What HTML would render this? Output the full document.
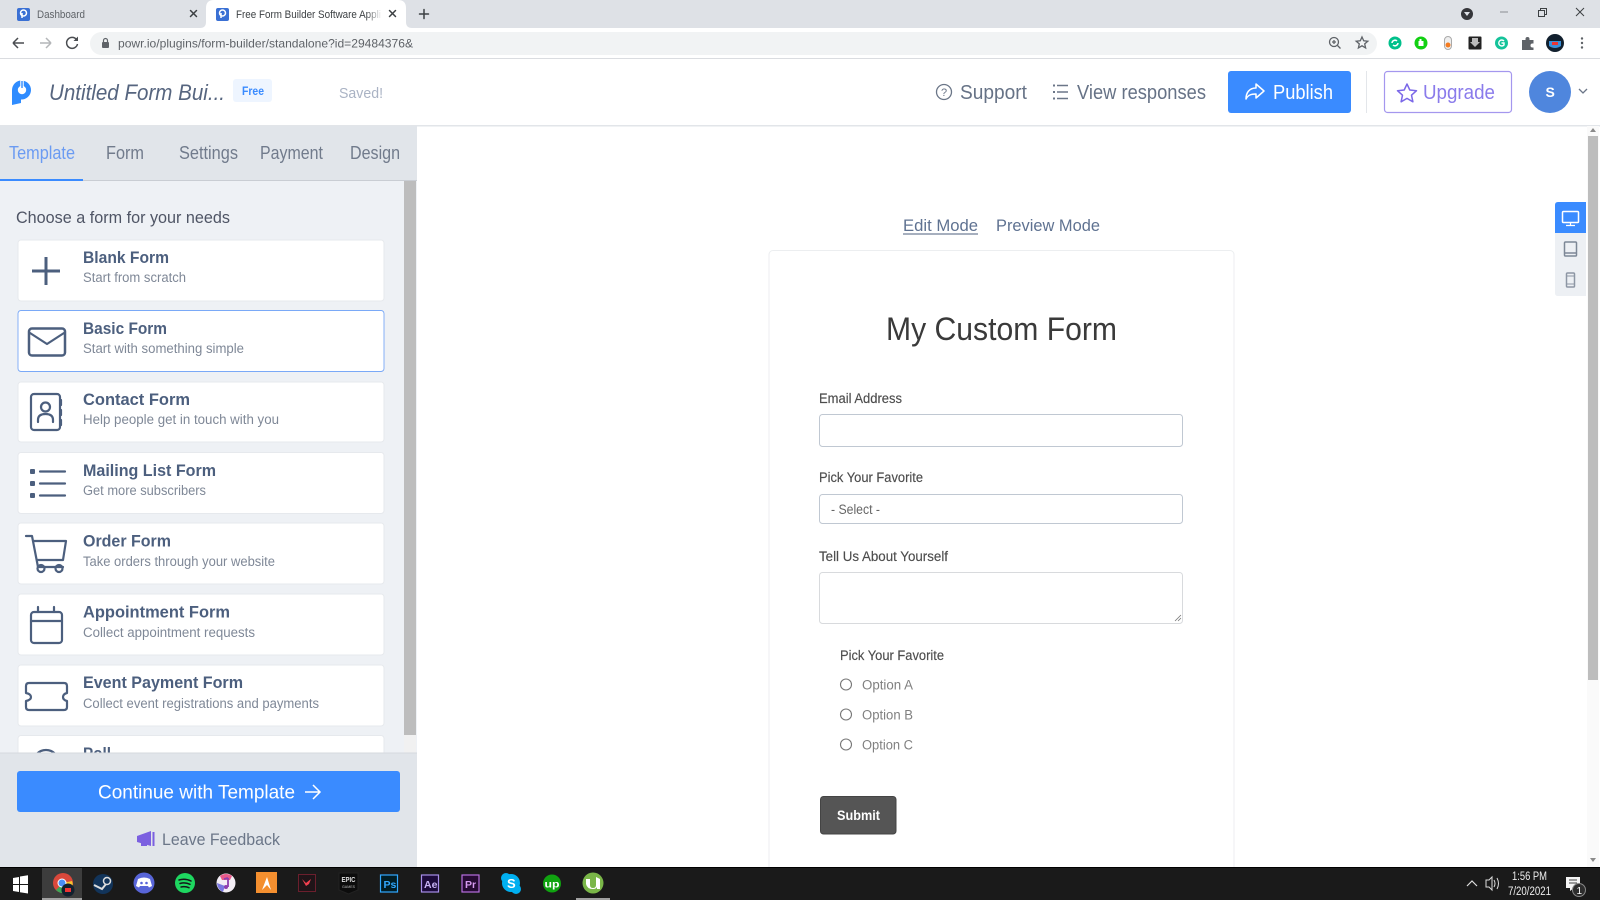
<!DOCTYPE html>
<html lang="en"><head><meta charset="utf-8"><title>Free Form Builder Software Application</title>
<style>
html,body{margin:0;padding:0;width:1600px;height:900px;overflow:hidden;background:#fff}
svg{display:block;filter:blur(.3px)}
text{font-family:"Liberation Sans",sans-serif}
.t{font-size:17px;fill:#4c5f7e;font-weight:bold}
.s{font-size:13.5px;fill:#7f8897}
.c{fill:#fff;stroke:#e6e9ed;stroke-width:1}
.i{fill:none;stroke:#4c5f7e;stroke-width:2.2;stroke-linejoin:round;stroke-linecap:round}
.l{font-size:13.5px;fill:#4d4d4d;stroke:#4d4d4d;stroke-width:.15}
.n{font-size:18px;fill:#717b8c}
.h{font-size:20px;fill:#667286}
.x{fill:none;stroke:#3c4043;stroke-width:1.5;stroke-linecap:round}
</style></head><body>
<svg width="1600" height="900" viewBox="0 0 1600 900" xmlns="http://www.w3.org/2000/svg">
<defs><linearGradient id="f"><stop offset="0" stop-color="#fff" stop-opacity="0"/><stop offset="1" stop-color="#fff"/></linearGradient></defs>
<rect width="1600" height="900" fill="#fff"/>
<!-- browser tabs -->
<rect width="1600" height="28" fill="#dee1e6"/>
<path d="M200 28q6 0 6-6V8q0-8 8-8h184q8 0 8 8v14q0 6 6 6z" fill="#fff"/>
<rect x="17" y="8" width="13" height="13" rx="2" fill="#3a70d4"/><circle cx="23.500" cy="13" r="3" fill="none" stroke="#fff" stroke-width="1.500"/><path d="M22 13v5" stroke="#fff" stroke-width="1.500"/>
<text x="37" y="18" font-size="11" fill="#5f6368" textLength="48" lengthAdjust="spacingAndGlyphs">Dashboard</text>
<path d="M190.500 10.500l6 6m0-6l-6 6" class="x"/>
<rect x="216" y="8" width="13" height="13" rx="2" fill="#3a70d4"/><circle cx="222.500" cy="13" r="3" fill="none" stroke="#fff" stroke-width="1.500"/><path d="M221 13v5" stroke="#fff" stroke-width="1.500"/>
<text x="236" y="18" font-size="11" fill="#3c4043" textLength="145" lengthAdjust="spacingAndGlyphs">Free Form Builder Software Appli</text>
<rect x="366" y="6" width="16" height="16" fill="url(#f)"/>
<path d="M389.500 10.500l6 6m0-6l-6 6" class="x"/>
<path d="M424 9.500v9m-4.500-4.500h9" class="x"/>
<circle cx="1467" cy="14" r="6" fill="#35363a"/><path d="M1464 12h6l-3 4z" fill="#dee1e6"/>
<path d="M1500 12h8" stroke="#8a8d91" stroke-width="1"/>
<rect x="1538.500" y="10.500" width="6" height="6" fill="none" stroke="#3c4043"/><path d="M1540.500 10.500v-2h6v6h-2" fill="none" stroke="#3c4043"/>
<path d="M1576 8l8 8m0-8l-8 8" stroke="#3c4043" fill="none"/>
<!-- address bar -->
<rect y="28" width="1600" height="30" fill="#fff"/><rect y="58" width="1600" height="1" fill="#dadce0"/>
<rect x="90" y="32" width="1287" height="23" rx="11.500" fill="#f1f3f4"/>
<path d="M13 43h11M13 43l5-5m-5 5l5 5" fill="none" stroke="#4a4d51" stroke-width="1.500"/>
<path d="M51 43H40M51 43l-5-5m5 5l-5 5" fill="none" stroke="#b4b6b9" stroke-width="1.500"/>
<path d="M76.500 39.500A5.500 5.500 0 1 0 77.500 44" fill="none" stroke="#4a4d51" stroke-width="1.500"/><path d="M78 36.500v4.500h-4.500z" fill="#4a4d51"/>
<rect x="102" y="42" width="7" height="6" rx="1" fill="#5f6368"/><path d="M103.500 42v-1.500a2 2 0 0 1 4 0V42" fill="none" stroke="#5f6368" stroke-width="1.200"/>
<text x="118" y="47.500" font-size="12" fill="#5f6368" textLength="295" lengthAdjust="spacingAndGlyphs">powr.io/plugins/form-builder/standalone?id=29484376&amp;</text>
<circle cx="1334" cy="42" r="4.500" fill="none" stroke="#5f6368" stroke-width="1.300"/><path d="M1337.500 45.500l3 3M1332 42h4M1334 40v4" stroke="#5f6368" stroke-width="1.300"/>
<path d="M1362 37l1.700 3.800 4.100.4-3.100 2.700.9 4-3.600-2.100-3.600 2.100.9-4-3.100-2.700 4.100-.4z" fill="none" stroke="#5f6368" stroke-width="1.300"/>
<circle cx="1395" cy="43" r="6.500" fill="#00c08b"/><path d="M1392 43a3 3 0 0 1 5-2m1 2a3 3 0 0 1-5 2" fill="none" stroke="#fff" stroke-width="1.500"/>
<circle cx="1421" cy="43" r="6.500" fill="#12d012"/><path d="M1418.500 44v-3h1v-2h2v2h2v5h-5z" fill="#fff"/>
<rect x="1444.500" y="36.500" width="7" height="13" rx="3.500" fill="#eee" stroke="#aaa"/><circle cx="1448" cy="45" r="2.500" fill="#f47b20"/>
<rect x="1468.500" y="36.500" width="13" height="13" rx="1" fill="#222"/><path d="M1472 38h6v4h2l-5 5-5-5h2z" fill="#bbb"/>
<circle cx="1501.500" cy="43" r="6.500" fill="#15c39a"/><path d="M1504 41a3 3 0 1 0 0 4v-2h-2.500" fill="none" stroke="#fff" stroke-width="1.400"/>
<path d="M1522 40h3.500v-1a2 2 0 0 1 4 0v1h4v3.500h-1a2 2 0 0 0 0 4h1V50h-11.500z" fill="#5f6368"/>
<circle cx="1555" cy="43" r="9" fill="#12202e"/><path d="M1549 41h12v5q-6 4-12 0z" fill="#3b8fd8"/><rect x="1552" y="42" width="6" height="3" fill="#e33"/>
<circle cx="1582" cy="38.500" r="1.200" fill="#5f6368"/><circle cx="1582" cy="43" r="1.200" fill="#5f6368"/><circle cx="1582" cy="47.500" r="1.200" fill="#5f6368"/>
<!-- app header -->
<rect y="125" width="1600" height="1.500" fill="#e2e5e9"/>
<path d="M12 90a9.500 9.500 0 1 1 9 9.500V103l-9 2z" fill="#2f8cff"/><circle cx="22" cy="90" r="4.200" fill="#fff"/><path d="M22 80v10" stroke="#fff" stroke-width="3.500"/><path d="M22 81v7" stroke="#2f8cff" stroke-width="1.400"/>
<text x="49" y="100" font-size="22" font-style="italic" fill="#56657f" textLength="176" lengthAdjust="spacingAndGlyphs">Untitled Form Bui...</text>
<rect x="233" y="79" width="39" height="23" rx="3" fill="#eef5ff"/>
<text x="242" y="95" font-size="12" font-weight="bold" fill="#3a8bff" textLength="22" lengthAdjust="spacingAndGlyphs">Free</text>
<text x="339" y="98" font-size="15" fill="#aab3c4" textLength="44" lengthAdjust="spacingAndGlyphs">Saved!</text>
<circle cx="944" cy="92" r="7.500" fill="none" stroke="#6b7688" stroke-width="1.300"/><text x="941" y="96" font-size="11" fill="#6b7688">?</text>
<text x="960" y="99" class="h" textLength="67" lengthAdjust="spacingAndGlyphs">Support</text>
<path d="M1057 85.500h11M1057 92h11M1057 98.500h11" stroke="#6b7688" stroke-width="1.500"/><path d="M1053 85.500h2M1053 92h2M1053 98.500h2" stroke="#6b7688" stroke-width="2"/>
<text x="1077" y="99" class="h" textLength="129" lengthAdjust="spacingAndGlyphs">View responses</text>
<rect x="1228" y="71" width="123" height="42" rx="3" fill="#3a8bff"/>
<path d="M1256 84l8 7-8 7v-4c-5 0-8 1-10 5 0-6 3-11 10-11z" fill="none" stroke="#fff" stroke-width="1.500" stroke-linejoin="round"/>
<text x="1273" y="99" font-size="20" fill="#fff" textLength="60" lengthAdjust="spacingAndGlyphs">Publish</text>
<rect x="1366" y="71" width="1" height="42" fill="#e3e6ea"/>
<rect x="1384.500" y="71.500" width="127" height="41" rx="3" fill="#fff" stroke="#a497ee" stroke-width="1.200"/>
<path d="M1407 84l2.800 6 6.700.7-5 4.500 1.400 6.600-5.900-3.400-5.900 3.400 1.400-6.600-5-4.500 6.700-.7z" fill="none" stroke="#7b68e8" stroke-width="1.500" stroke-linejoin="round"/>
<text x="1423" y="99" font-size="20" fill="#8a7beb" textLength="72" lengthAdjust="spacingAndGlyphs">Upgrade</text>
<circle cx="1550" cy="92" r="21" fill="#4f86dd"/><text x="1545.500" y="97" font-size="14" font-weight="bold" fill="#fff">S</text>
<path d="M1579 89l4 4 4-4" fill="none" stroke="#6b7688" stroke-width="1.300"/>
<!-- sidebar -->
<rect y="126" width="417" height="741" fill="#eef1f5"/>
<rect y="126" width="417" height="54" fill="#e1e5ea"/><rect y="180" width="417" height="1" fill="#c9cdd3"/>
<rect y="179" width="83" height="2" fill="#3a8bff"/>
<text x="9" y="159" font-size="18" fill="#6b9bf2" textLength="66" lengthAdjust="spacingAndGlyphs">Template</text>
<text x="106" y="159" class="n" textLength="38" lengthAdjust="spacingAndGlyphs">Form</text>
<text x="179" y="159" class="n" textLength="59" lengthAdjust="spacingAndGlyphs">Settings</text>
<text x="260" y="159" class="n" textLength="63" lengthAdjust="spacingAndGlyphs">Payment</text>
<text x="350" y="159" class="n" textLength="50" lengthAdjust="spacingAndGlyphs">Design</text>
<rect x="404" y="181" width="12" height="554" fill="#bdbdbd"/><rect x="404" y="735" width="12" height="18" fill="#f1f1f1"/>
<text x="16" y="223" font-size="16.500" fill="#4f5565" textLength="214" lengthAdjust="spacingAndGlyphs">Choose a form for your needs</text>
<!-- cards -->
<rect x="18" y="240" width="366" height="61" rx="3" class="c"/>
<rect x="18" y="310.500" width="366" height="61" rx="3" fill="#fff" stroke="#7aa9f7" stroke-width=".9"/>
<rect x="18" y="382" width="366" height="60" rx="3" class="c"/>
<rect x="18" y="452.500" width="366" height="61" rx="3" class="c"/>
<rect x="18" y="523" width="366" height="61" rx="3" class="c"/>
<rect x="18" y="594" width="366" height="61" rx="3" class="c"/>
<rect x="18" y="665" width="366" height="61" rx="3" class="c"/>
<rect x="18" y="735.500" width="366" height="61" rx="3" class="c"/>
<text x="83" y="263" class="t" textLength="86" lengthAdjust="spacingAndGlyphs">Blank Form</text><text x="83" y="282" class="s" textLength="103" lengthAdjust="spacingAndGlyphs">Start from scratch</text>
<text x="83" y="334" class="t" textLength="84" lengthAdjust="spacingAndGlyphs">Basic Form</text><text x="83" y="353" class="s" textLength="161" lengthAdjust="spacingAndGlyphs">Start with something simple</text>
<text x="83" y="405" class="t" textLength="107" lengthAdjust="spacingAndGlyphs">Contact Form</text><text x="83" y="424" class="s" textLength="196" lengthAdjust="spacingAndGlyphs">Help people get in touch with you</text>
<text x="83" y="476" class="t" textLength="133" lengthAdjust="spacingAndGlyphs">Mailing List Form</text><text x="83" y="495" class="s" textLength="123" lengthAdjust="spacingAndGlyphs">Get more subscribers</text>
<text x="83" y="546.500" class="t" textLength="88" lengthAdjust="spacingAndGlyphs">Order Form</text><text x="83" y="566" class="s" textLength="192" lengthAdjust="spacingAndGlyphs">Take orders through your website</text>
<text x="83" y="617.500" class="t" textLength="147" lengthAdjust="spacingAndGlyphs">Appointment Form</text><text x="83" y="637" class="s" textLength="172" lengthAdjust="spacingAndGlyphs">Collect appointment requests</text>
<text x="83" y="688" class="t" textLength="160" lengthAdjust="spacingAndGlyphs">Event Payment Form</text><text x="83" y="708" class="s" textLength="236" lengthAdjust="spacingAndGlyphs">Collect event registrations and payments</text>
<text x="83" y="759" class="t" textLength="28" lengthAdjust="spacingAndGlyphs">Poll</text>
<!-- card icons -->
<path d="M46 257v28M32 271h28" fill="none" stroke="#4c5f7e" stroke-width="3"/>
<rect x="29" y="328.500" width="36" height="27" rx="3" class="i" style="stroke-width:2.500"/><path d="M30 333l17 11 17-11" class="i"/>
<rect x="31" y="394" width="29" height="36" rx="3" class="i"/><path d="M61 400v5M61 410v5M61 420v5" class="i"/><circle cx="45.500" cy="407" r="4.500" class="i"/><path d="M38 422v-2q0-6 7.500-6t7.500 6v2" class="i"/>
<rect x="30" y="469" width="5" height="5" rx="1" fill="#4c5f7e"/><rect x="30" y="481" width="5" height="5" rx="1" fill="#4c5f7e"/><rect x="30" y="493" width="5" height="5" rx="1" fill="#4c5f7e"/>
<path d="M40 471.500h25M40 483.500h25M40 495.500h25" class="i"/>
<path d="M26 536h6l6 31h25M33 541h33l-3 19H37" class="i"/><circle cx="41" cy="568.500" r="3.500" class="i"/><circle cx="59" cy="568.500" r="3.500" class="i"/>
<rect x="31" y="612" width="31" height="31" rx="3" class="i"/><path d="M31 621h31M38 607v5M54 607v5" class="i"/>
<path d="M29 683h35q3 0 3 3v7q-4 1-4 4t4 4v6q0 3-3 3H29q-3 0-3-3v-6q5-1 5-4t-5-4v-7q0-3 3-3z" class="i"/>
<circle cx="46" cy="763" r="13" class="i"/>
<!-- sidebar footer -->
<rect y="753" width="417" height="114" fill="#e1e5ea"/><rect y="752.500" width="417" height="1" fill="#d5d9de"/>
<rect x="17" y="771" width="383" height="41" rx="3" fill="#3a8bff"/>
<text x="98" y="798.500" font-size="19.500" fill="#fff" textLength="197" lengthAdjust="spacingAndGlyphs">Continue with Template</text>
<path d="M305 792h14m-6-7l7 7-7 7" fill="none" stroke="#fff" stroke-width="1.500"/>
<path d="M137 836l14-5v15l-14-4z" fill="#7b60e0"/><rect x="152.500" y="832" width="2" height="14" fill="#7b60e0"/><rect x="141" y="842" width="6" height="4" fill="#7b60e0"/>
<text x="162" y="845" font-size="17" fill="#6b7688" textLength="118" lengthAdjust="spacingAndGlyphs">Leave Feedback</text>
<!-- canvas -->
<text x="903" y="231" font-size="17" fill="#5f7291" textLength="75" lengthAdjust="spacingAndGlyphs">Edit Mode</text><rect x="903" y="233.500" width="75" height="1" fill="#4c5f7e"/>
<text x="996" y="231" font-size="17" fill="#5f7291" textLength="104" lengthAdjust="spacingAndGlyphs">Preview Mode</text>
<rect x="769" y="250.500" width="465" height="640" rx="4" fill="#fff" stroke="#eceef0"/>
<text x="886" y="340" font-size="32" fill="#3a3a3a" textLength="231" lengthAdjust="spacingAndGlyphs">My Custom Form</text>
<text x="819" y="403" class="l" textLength="83" lengthAdjust="spacingAndGlyphs">Email Address</text>
<rect x="819.500" y="414.500" width="363" height="32" rx="3" fill="#fff" stroke="#c0c8d2"/>
<text x="819" y="482" class="l" textLength="104" lengthAdjust="spacingAndGlyphs">Pick Your Favorite</text>
<rect x="819.500" y="494.500" width="363" height="29" rx="3" fill="#fff" stroke="#c0c8d2"/>
<text x="831" y="514" font-size="13.500" fill="#666" textLength="49" lengthAdjust="spacingAndGlyphs">- Select -</text>
<text x="819" y="561" class="l" textLength="129" lengthAdjust="spacingAndGlyphs">Tell Us About Yourself</text>
<rect x="819.500" y="572.500" width="363" height="51" rx="3" fill="#fff" stroke="#d8dadd"/>
<path d="M1175 621l6-6M1178 621l3-3" stroke="#777" stroke-width=".8"/>
<text x="840" y="660" class="l" textLength="104" lengthAdjust="spacingAndGlyphs">Pick Your Favorite</text>
<circle cx="846" cy="684.500" r="5.500" fill="#fff" stroke="#777" stroke-width="1.100"/><text x="862" y="689.500" font-size="13.500" fill="#808080" textLength="51" lengthAdjust="spacingAndGlyphs">Option A</text>
<circle cx="846" cy="714.500" r="5.500" fill="#fff" stroke="#777" stroke-width="1.100"/><text x="862" y="719.500" font-size="13.500" fill="#808080" textLength="51" lengthAdjust="spacingAndGlyphs">Option B</text>
<circle cx="846" cy="744.500" r="5.500" fill="#fff" stroke="#777" stroke-width="1.100"/><text x="862" y="749.500" font-size="13.500" fill="#808080" textLength="51" lengthAdjust="spacingAndGlyphs">Option C</text>
<rect x="820.500" y="796.500" width="75.500" height="37.500" rx="3" fill="#555" stroke="#444"/>
<text x="837" y="820" font-size="14" font-weight="bold" fill="#fff" textLength="43" lengthAdjust="spacingAndGlyphs">Submit</text>
<!-- device panel -->
<path d="M1555 205q0-3 3-3h28v94h-28q-3 0-3-3z" fill="#edf0f4"/>
<path d="M1555 233v-28q0-3 3-3h28v31z" fill="#3a8bff"/>
<rect x="1562.500" y="211.500" width="16" height="11" rx="1" fill="none" stroke="#fff" stroke-width="1.500"/><path d="M1566 225.500h9M1570.500 223v2" stroke="#fff" stroke-width="1.200"/>
<rect x="1564.500" y="242" width="12" height="14" rx="1" fill="none" stroke="#7d8796" stroke-width="1.500"/><path d="M1564.500 253h12" stroke="#7d8796" stroke-width="1.500"/>
<rect x="1566.500" y="273" width="8" height="14" rx="1" fill="none" stroke="#8d96a4" stroke-width="1.500"/><path d="M1566.500 284h8M1566.500 276h8" stroke="#8d96a4"/>
<!-- page scrollbar -->
<rect x="1587" y="126" width="12" height="741" fill="#fafafa"/>
<rect x="1588" y="136" width="10" height="544" fill="#bdbdbd"/>
<path d="M1593 128l3 4h-6zM1593 862l3-4h-6z" fill="#8a8a8a"/>
<!-- taskbar -->
<rect y="867" width="1600" height="33" fill="#1a1a1a"/><rect y="867" width="1600" height="1" fill="#000"/>
<path d="M13 878l6-1v7h-6zM20 876.500l8-1.200V884h-8zM13 885h6v7l-6-1zM20 885h8v8.500l-8-1.200z" fill="#fff"/>
<rect x="42" y="868" width="40" height="32" fill="#3d3d3d"/><rect x="42" y="898" width="40" height="2" fill="#a0a0a0"/>
<circle cx="63" cy="883" r="10" fill="#d9483b"/><path d="M63 883l9 5a10 10 0 0 1-16 2z" fill="#3aa757"/><path d="M63 883l9-2a10 10 0 0 1 0 7z" fill="#f7c52e"/><circle cx="62" cy="883" r="4" fill="#4a8df6" stroke="#fff"/>
<circle cx="68" cy="890" r="6.500" fill="#12202e"/><rect x="65" y="888" width="6" height="4" fill="#e33"/>
<circle cx="103" cy="884" r="10" fill="#12345a"/><circle cx="107" cy="881" r="3.500" fill="none" stroke="#ddd" stroke-width="1.500"/><path d="M94 885l8 4 4-5" stroke="#ddd" stroke-width="2" fill="none"/>
<circle cx="144" cy="883" r="10.500" fill="#5865d8"/><path d="M138 879q6-3 12 0l2 7-3 1.500-1-1.500h-8l-1 1.500-3-1.500z" fill="#fff"/><circle cx="141.500" cy="883" r="1.300" fill="#5865d8"/><circle cx="146.500" cy="883" r="1.300" fill="#5865d8"/>
<circle cx="185" cy="883" r="10" fill="#1ed760"/><path d="M179 880q6-2 12 1M180 883.500q5-1.500 10 .8M181 887q4-1 8 .7" fill="none" stroke="#15161a" stroke-width="1.500" stroke-linecap="round"/>
<circle cx="226" cy="883" r="9.500" fill="#f3eef5"/><path d="M220 876a10 10 0 0 1 12 0l-2 4h-8z" fill="#e85a8a"/><path d="M217 883a10 10 0 0 0 6 9l2-6z" fill="#7a78e0"/><path d="M228 878v9M224 879l4-1" stroke="#8d3fb0" stroke-width="1.800" fill="none"/><circle cx="226" cy="887" r="2" fill="#8d3fb0"/>
<rect x="256" y="872" width="21" height="21" fill="#f48f2f"/><path d="M262 890l5-13 4 13-4-5z" fill="#fff"/>
<rect x="298.500" y="874.500" width="17" height="17" fill="#1f1418" stroke="#6b1f2d"/><path d="M302 879l4 7 3-2 2-5-5 4z" fill="#f2404f"/>
<path d="M339 873h19v17l-9.500 4-9.500-4z" fill="#0c0c0c" stroke="#222"/><text x="341.500" y="882" font-size="7.500" font-weight="bold" fill="#ddd" textLength="14" lengthAdjust="spacingAndGlyphs">EPIC</text><text x="342" y="888" font-size="3.500" fill="#bbb" textLength="13" lengthAdjust="spacingAndGlyphs">GAMES</text>
<rect x="380.500" y="875" width="17" height="17" fill="#001d26" stroke="#31a8ff" stroke-width="1.200"/><text x="383.500" y="888" font-size="10.500" font-weight="bold" fill="#31a8ff">Ps</text>
<rect x="421.500" y="875" width="17" height="17" fill="#1c0a3a" stroke="#a78ee8" stroke-width="1.200"/><text x="424" y="888" font-size="10.500" font-weight="bold" fill="#c8b4f5">Ae</text>
<rect x="462" y="875" width="17" height="17" fill="#260a33" stroke="#b76de0" stroke-width="1.200"/><text x="465" y="888" font-size="10.500" font-weight="bold" fill="#d69bf0">Pr</text>
<circle cx="511" cy="883" r="9" fill="#00aff0"/><circle cx="506" cy="878" r="5" fill="#00aff0"/><circle cx="516" cy="889" r="5" fill="#00aff0"/><text x="507" y="888" font-size="13" font-weight="bold" fill="#fff">S</text>
<circle cx="552" cy="883.500" r="9" fill="#10a310"/><text x="544.500" y="887.500" font-size="10.500" font-weight="bold" fill="#fff" textLength="15" lengthAdjust="spacingAndGlyphs">up</text>
<rect x="576" y="898" width="34" height="2" fill="#a0a0a0"/>
<circle cx="593" cy="883" r="10.500" fill="#7ab648"/><path d="M586 879h4v6q0 3 3 3t3-3v-8l4 2v10h-3v-2q-1 2-4 2-6 0-7-5z" fill="#fff"/>
<path d="M1467 886l5-5 5 5" fill="none" stroke="#ddd" stroke-width="1.200"/>
<path d="M1486 880h3l3-3v13l-3-3h-3z" fill="none" stroke="#ddd"/><path d="M1494 880q2 3.500 0 7M1497 878q3 5.500 0 11" fill="none" stroke="#ddd"/>
<text x="1512" y="880" font-size="11.500" fill="#eee" textLength="35" lengthAdjust="spacingAndGlyphs">1:56 PM</text>
<text x="1508" y="895" font-size="11.500" fill="#eee" textLength="43" lengthAdjust="spacingAndGlyphs">7/20/2021</text>
<path d="M1566 877h14v11h-6l-4 3v-3h-4z" fill="#f5f5f5"/><path d="M1569 880h8M1569 883h8" stroke="#444"/>
<circle cx="1579" cy="890" r="6.500" fill="#2d2d2d" stroke="#888"/><text x="1576.500" y="894" font-size="10" fill="#fff">1</text>
</svg>
</body></html>
